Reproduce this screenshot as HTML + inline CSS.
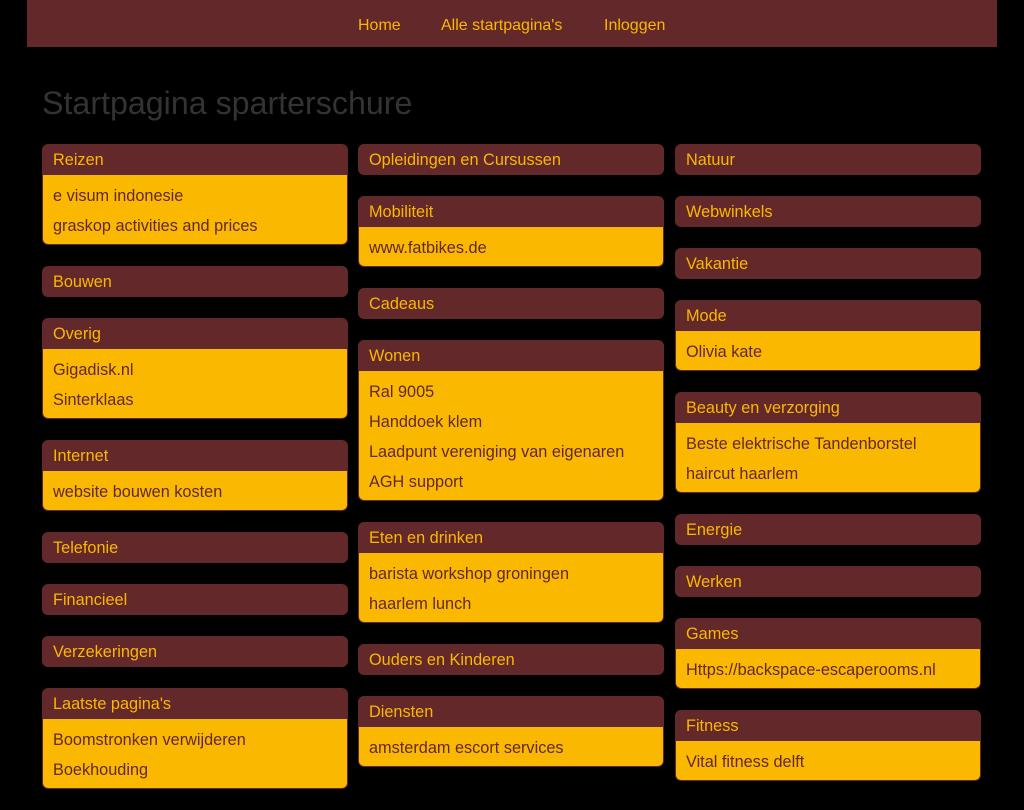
<!DOCTYPE html>
<html><head><meta charset="utf-8"><style>
*{margin:0;padding:0;box-sizing:border-box}
html,body{width:1024px;height:768px;overflow:hidden;background:#000;font-family:"Liberation Sans",Arial,sans-serif}
.nav{position:absolute;left:27px;top:0;width:970px;height:47px;background:#62282a}
.nav a{position:absolute;top:17px;color:#fbb800;font-size:16px;text-decoration:none;line-height:18px}
h1{position:absolute;left:42px;top:85px;font-size:32.2px;font-weight:normal;color:#333;line-height:36px}
.col{position:absolute;top:144px;width:306px}
.p{border-radius:6px;overflow:hidden;margin-bottom:21px}
.h{background:#62282a;color:#fbb800;height:31px;line-height:32px;padding-left:11px;font-size:16.3px}
.b{background:#fbb800;border:1px solid #62282a;border-top:0;border-radius:0 0 6px 6px;padding:6px 10px 3px}
.b div{line-height:30px;color:#62282a;font-size:16.3px;white-space:nowrap}
</style></head><body>
<div class="nav"><a style="left:331px">Home</a><a style="left:414px">Alle startpagina's</a><a style="left:577px">Inloggen</a></div>
<h1>Startpagina sparterschure</h1>
<div class="col" style="left:42px">
<div class="p"><div class="h">Reizen</div><div class="b"><div>e visum indonesie</div><div>graskop activities and prices</div></div></div>
<div class="p"><div class="h">Bouwen</div></div>
<div class="p"><div class="h">Overig</div><div class="b"><div>Gigadisk.nl</div><div>Sinterklaas</div></div></div>
<div class="p"><div class="h">Internet</div><div class="b"><div>website bouwen kosten</div></div></div>
<div class="p"><div class="h">Telefonie</div></div>
<div class="p"><div class="h">Financieel</div></div>
<div class="p"><div class="h">Verzekeringen</div></div>
<div class="p"><div class="h">Laatste pagina's</div><div class="b"><div>Boomstronken verwijderen</div><div>Boekhouding</div></div></div>
</div>
<div class="col" style="left:358px">
<div class="p"><div class="h">Opleidingen en Cursussen</div></div>
<div class="p"><div class="h">Mobiliteit</div><div class="b"><div>www.fatbikes.de</div></div></div>
<div class="p"><div class="h">Cadeaus</div></div>
<div class="p"><div class="h">Wonen</div><div class="b"><div>Ral 9005</div><div>Handdoek klem</div><div>Laadpunt vereniging van eigenaren</div><div>AGH support</div></div></div>
<div class="p"><div class="h">Eten en drinken</div><div class="b"><div>barista workshop groningen</div><div>haarlem lunch</div></div></div>
<div class="p"><div class="h">Ouders en Kinderen</div></div>
<div class="p"><div class="h">Diensten</div><div class="b"><div>amsterdam escort services</div></div></div>
</div>
<div class="col" style="left:675px">
<div class="p"><div class="h">Natuur</div></div>
<div class="p"><div class="h">Webwinkels</div></div>
<div class="p"><div class="h">Vakantie</div></div>
<div class="p"><div class="h">Mode</div><div class="b"><div>Olivia kate</div></div></div>
<div class="p"><div class="h">Beauty en verzorging</div><div class="b"><div>Beste elektrische Tandenborstel</div><div>haircut haarlem</div></div></div>
<div class="p"><div class="h">Energie</div></div>
<div class="p"><div class="h">Werken</div></div>
<div class="p"><div class="h">Games</div><div class="b"><div>Https://backspace-escaperooms.nl</div></div></div>
<div class="p"><div class="h">Fitness</div><div class="b"><div>Vital fitness delft</div></div></div>
</div>
</body></html>
